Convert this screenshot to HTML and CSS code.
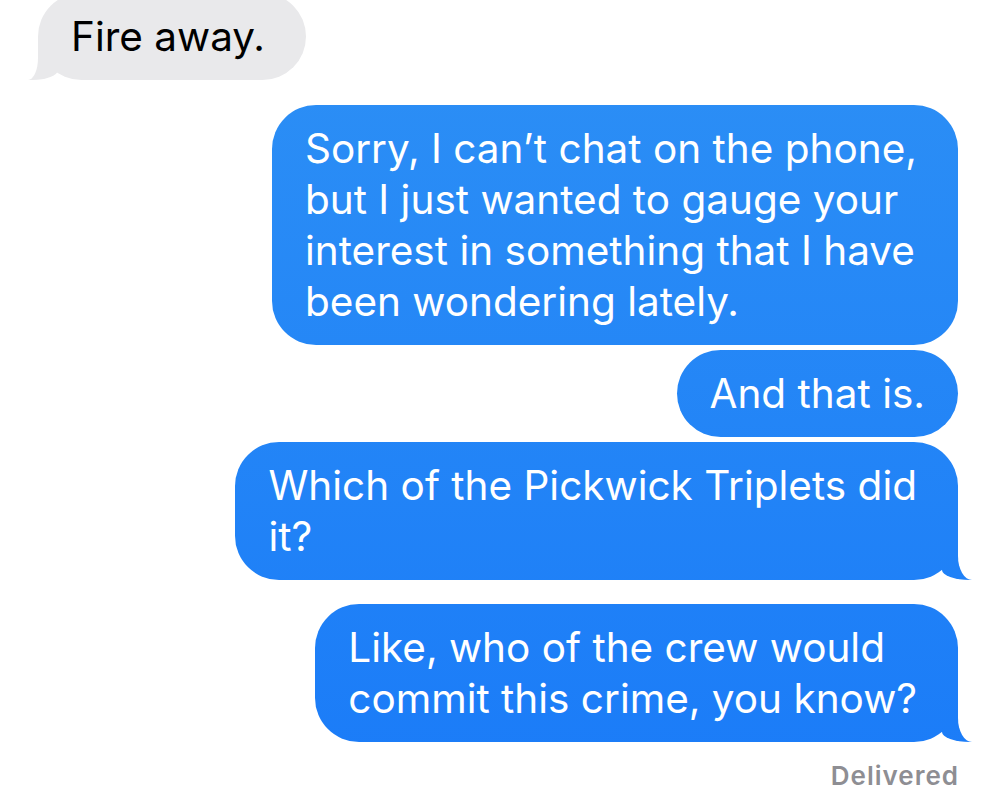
FILE: index.html
```html
<!DOCTYPE html>
<html lang="en">
<head>
    <meta charset="UTF-8">
    <meta name="viewport" content="width=device-width, initial-scale=1.0">
    <title>Messages</title>
    <link rel="stylesheet" href="styles.css">
</head>
<body>
    <div id="thread">
        <div class="msg them tail">Fire away.</div>

        <div class="msg me">Sorry, I can’t chat on the phone,<br>but I just wanted to gauge your<br>interest in something that I have<br>been wondering lately.</div>
        <div class="msg me short">And that is.</div>
        <div class="msg me tail">Which of the Pickwick Triplets did<br>it?</div>

        <div class="msg me tail gap">Like, who of the crew would<br>commit this crime, you know?</div>

        <div class="status">Delivered</div>
    </div>
</body>
</html>
```

FILE: styles.css
```css
body {
    font-family: Inter, "Noto Sans", sans-serif;
    margin: 0;
    padding: 0;
    background: #fff;
    overflow: hidden;
}

#thread {
    display: flex;
    flex-direction: column;
    gap: 5px;
    padding: 0 42px 0 38px;
}

.msg {
    position: relative;
    font-size: 40.5px;
    line-height: 51px;
    padding: 18px 41px 18px 33px;
    border-radius: 44px;
    max-width: 700px;
}

.them {
    align-self: flex-start;
    background: #e9e9eb;
    color: #000;
    margin-top: -7px;
    margin-bottom: 20px;
}

.me {
    align-self: flex-end;
    color: #fff;
    background: linear-gradient(#2d90f5, #1a7bf8) fixed;
}

.short {
    padding-right: 33px;
}

.gap {
    margin-top: 19px;
}

/* the little tails */
.tail::before,
.tail::after {
    content: "";
    position: absolute;
    bottom: 0;
    height: 44px;
    width: 30px;
}

.me.tail::before {
    right: -14px;
    background: linear-gradient(#2d90f5, #1a7bf8) fixed;
    border-bottom-left-radius: 28px 10px;
}

.me.tail::after {
    right: -30px;
    background: #fff;
    border-bottom-left-radius: 14px 24px;
}

.them.tail::before {
    left: -10px;
    background: #e9e9eb;
    border-bottom-right-radius: 26px 10px;
}

.them.tail::after {
    left: -30px;
    background: #fff;
    border-bottom-right-radius: 10px 22px;
}

.status {
    align-self: flex-end;
    margin-top: 13px;
    font-size: 26px;
    font-weight: 600;
    letter-spacing: 1px;
    margin-right: -1px;
    color: #8e8e93;
}
```
